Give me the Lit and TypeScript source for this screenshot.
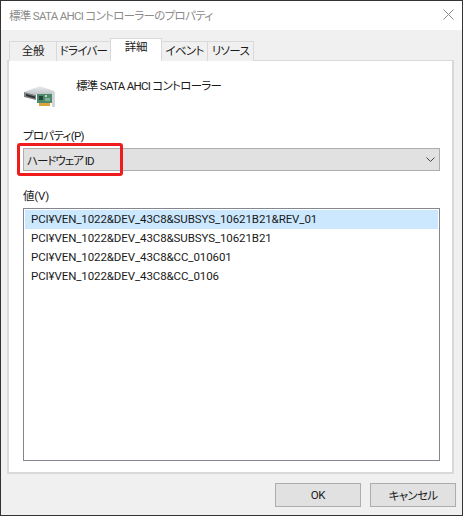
import { LitElement, html, css } from "lit";
import { customElement } from "lit/decorators.js";

@customElement("app-root")
export class AppRoot extends LitElement {
  static styles = css`
    :host { display: block; width: 463px; height: 516px; font-family: Roboto, "Noto Sans CJK JP", sans-serif; font-size: 11.5px; letter-spacing: -0.2px; font-feature-settings: "palt"; color: #1a1a1a; }
    .tight { letter-spacing: -0.7px; }
    .tighter { letter-spacing: -1px; }
    .win { box-sizing: border-box; width: 463px; height: 516px; border: 1px solid #333; background: #f0f0f0; display: flex; flex-direction: column; }
    .title { height: 29px; background: #fff; display: flex; align-items: center; justify-content: space-between; padding: 0 8px 1px 8px; color: #8c8c8c; flex: none; box-sizing: border-box; }
    .title svg { display: block; margin-bottom: 2px; }
    .body { flex: 1; padding: 9px 8px 0 6px; display: flex; flex-direction: column; }
    .tabs { display: flex; padding-left: 2px; height: 22px; align-items: flex-end; position: relative; z-index: 1; margin-bottom: -1px; flex: none; }
    .tab { box-sizing: border-box; height: 20px; border: 1px solid #d9d9d9; border-bottom: none; margin-left: -1px; background: #f0f0f0; display: flex; align-items: center; justify-content: center; line-height: 1; white-space: nowrap; }
    .tab:first-child { margin-left: 0; }
    .tab.on { height: 23px; background: #fff; padding-bottom: 4px; }
    .panel { box-sizing: border-box; height: 414px; background: #fff; border: 2px solid #d9d9d9; border-top-width: 1px; padding: 0 12px 0 14px; display: flex; flex-direction: column; flex: none; }
    .head { display: flex; height: 67px; flex: none; }
    .head svg { margin: 24px 0 0 1px; flex: none; }
    .head span { margin: 17px 0 0 20px; line-height: 16px; }
    label { display: block; line-height: 16px; }
    .select { position: relative; box-sizing: border-box; height: 23px; margin-top: 4px; background: #e1e1e1; border: 1px solid #adadad; display: flex; align-items: center; justify-content: space-between; padding: 0 4px 0 3px; flex: none; }
    .mark { position: absolute; left: -7px; top: -6px; width: 106px; height: 33px; box-sizing: border-box; border: 3px solid #ee1c1c; border-radius: 3px; }
    .vlabel { margin-top: 17px; }
    .list { box-sizing: border-box; height: 253px; margin-top: 4px; border: 1px solid #82878f; padding: 1px; background: #fff; flex: none; }
    .row { height: 19px; line-height: 19px; padding-left: 6px; box-sizing: border-box; letter-spacing: -0.1px; }
    .row.sel { background: #cce8ff; }
    .foot { display: flex; justify-content: flex-end; gap: 9px; margin-top: 9px; margin-right: -2px; flex: none; }
    .btn { box-sizing: border-box; width: 86px; height: 24px; background: #e1e1e1; border: 1px solid #adadad; display: flex; align-items: center; justify-content: center; }
  `;

  render() {
    return html`
      <div class="win">
        <div class="title">
          <span class="tight">標準 SATA AHCI コントローラーのプロパティ</span>
          <svg width="11" height="11" viewBox="0 0 11 11"><path d="M.5.5l10 10M10.5.5l-10 10" stroke="#8c8c8c" fill="none"/></svg>
        </div>
        <div class="body">
          <div class="tabs">
            <div class="tab" style="width:48px">全般</div>
            <div class="tab tight" style="width:55px">ドライバー</div>
            <div class="tab on" style="width:52px">詳細</div>
            <div class="tab tight" style="width:47px">イベント</div>
            <div class="tab tight" style="width:47px">リソース</div>
          </div>
          <div class="panel">
            <div class="head">
              <svg width="32" height="22" viewBox="0 0 32 22">
                <defs>
                  <linearGradient id="top" x1="0" y1="0" x2="0" y2="1"><stop offset="0" stop-color="#eceef0"/><stop offset="1" stop-color="#b9bec2"/></linearGradient>
                </defs>
                <path d="M0 7 L16 1 L30 6 L30 9 L13 9 L12 10 Z" fill="url(#top)"/>
                <path d="M0 7 L12 10 L12 15 L0 12 Z" fill="#7c8184"/>
                <path d="M2 9 L11 11.5 L11 13.5 L2 11 Z" fill="#2e3234"/>
                <rect x="13" y="9" width="15" height="9" fill="#4d8a6b"/>
                <rect x="15" y="11" width="4" height="4" fill="#23443a"/>
                <rect x="21" y="10" width="2" height="2" fill="#bcd4c6"/>
                <rect x="21" y="13" width="5" height="3" fill="#7fae96"/>
                <rect x="15" y="18" width="11" height="3" fill="#dca23c"/>
                <path d="M28 6 L31 7 L31 22 L28 22 Z" fill="#d3d6d8"/>
              </svg>
              <span class="tight">標準 SATA AHCI コントローラー</span>
            </div>
            <label class="tight">プロパティ(P)</label>
            <div class="select">
              <span class="tighter">ハードウェア ID</span>
              <svg width="9" height="5" viewBox="0 0 9 5"><path d="M.5.5l4 4 4-4" stroke="#444" fill="none"/></svg>
              <div class="mark"></div>
            </div>
            <label class="vlabel">値(V)</label>
            <div class="list">
              <div class="row sel">PCI¥VEN_1022&DEV_43C8&SUBSYS_10621B21&REV_01</div>
              <div class="row">PCI¥VEN_1022&DEV_43C8&SUBSYS_10621B21</div>
              <div class="row">PCI¥VEN_1022&DEV_43C8&CC_010601</div>
              <div class="row">PCI¥VEN_1022&DEV_43C8&CC_0106</div>
            </div>
          </div>
          <div class="foot">
            <div class="btn">OK</div>
            <div class="btn tight">キャンセル</div>
          </div>
        </div>
      </div>
    `;
  }
}
